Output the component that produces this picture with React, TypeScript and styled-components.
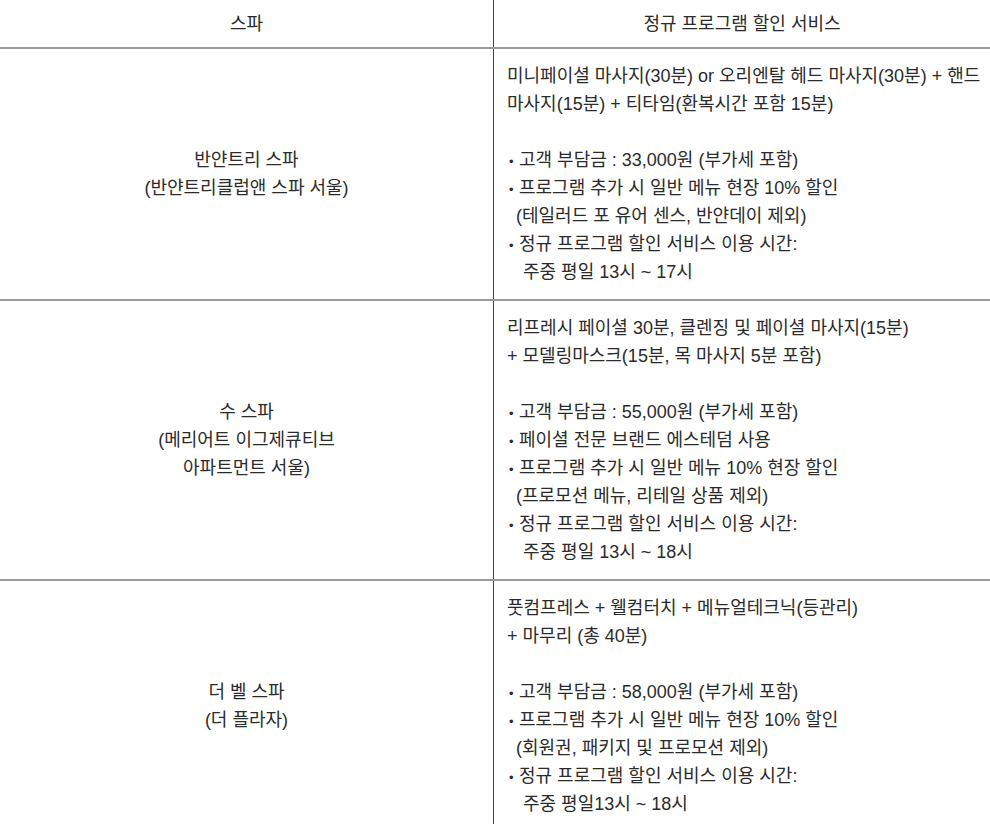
import React from "react";
import styled, { createGlobalStyle } from "styled-components";

type Note = {
  text: string;
  bullet?: boolean;
  indent?: number;
};

type Spa = {
  name: string[];
  intro: string[];
  notes: Note[];
};

const spas: Spa[] = [
  {
    name: ["반얀트리 스파", "(반얀트리클럽앤 스파 서울)"],
    intro: [
      "미니페이셜 마사지(30분) or 오리엔탈 헤드 마사지(30분) + 핸드",
      "마사지(15분) + 티타임(환복시간 포함 15분)",
    ],
    notes: [
      { text: "고객 부담금 : 33,000원 (부가세 포함)", bullet: true },
      { text: "프로그램 추가 시 일반 메뉴 현장 10% 할인", bullet: true },
      { text: "(테일러드 포 유어 센스, 반얀데이 제외)", indent: 9 },
      { text: "정규 프로그램 할인 서비스 이용 시간:", bullet: true },
      { text: "주중 평일 13시 ~ 17시", indent: 16 },
    ],
  },
  {
    name: ["수 스파", "(메리어트 이그제큐티브", "아파트먼트 서울)"],
    intro: [
      "리프레시 페이셜 30분, 클렌징 및 페이셜 마사지(15분)",
      "+ 모델링마스크(15분, 목 마사지 5분 포함)",
    ],
    notes: [
      { text: "고객 부담금 : 55,000원 (부가세 포함)", bullet: true },
      { text: "페이셜 전문 브랜드 에스테덤 사용", bullet: true },
      { text: "프로그램 추가 시 일반 메뉴 10% 현장 할인", bullet: true },
      { text: "(프로모션 메뉴, 리테일 상품 제외)", indent: 9 },
      { text: "정규 프로그램 할인 서비스 이용 시간:", bullet: true },
      { text: "주중 평일 13시 ~ 18시", indent: 16 },
    ],
  },
  {
    name: ["더 벨 스파", "(더 플라자)"],
    intro: ["풋컴프레스 + 웰컴터치 + 메뉴얼테크닉(등관리)", "+ 마무리 (총 40분)"],
    notes: [
      { text: "고객 부담금 : 58,000원 (부가세 포함)", bullet: true },
      { text: "프로그램 추가 시 일반 메뉴 현장 10% 할인", bullet: true },
      { text: "(회원권, 패키지 및 프로모션 제외)", indent: 9 },
      { text: "정규 프로그램 할인 서비스 이용 시간:", bullet: true },
      { text: "주중 평일13시 ~ 18시", indent: 16 },
    ],
  },
];

const App = () => {
  return (
    <>
      <GlobalStyle />
      <Table>
        <HeaderRow>
          <HeadCell $divider>스파</HeadCell>
          <HeadCell>정규 프로그램 할인 서비스</HeadCell>
        </HeaderRow>
        {spas.map((spa) => (
          <Row key={spa.name[0]}>
            <SpaCell>
              {spa.name.map((line) => (
                <Line key={line}>{line}</Line>
              ))}
            </SpaCell>
            <DetailCell>
              {spa.intro.map((line) => (
                <Line key={line}>{line}</Line>
              ))}
              <Notes>
                {spa.notes.map((note) => (
                  <NoteLine key={note.text} $indent={note.indent ?? 0}>
                    {note.bullet ? <Bullet>•</Bullet> : null}
                    {note.text}
                  </NoteLine>
                ))}
              </Notes>
            </DetailCell>
          </Row>
        ))}
      </Table>
    </>
  );
};

export default App;

const GlobalStyle = createGlobalStyle`
  html, body {
    margin: 0;
    padding: 0;
    background: #ffffff;
    overflow: hidden;
  }
  body {
    font-family: "Liberation Sans", "Noto Sans CJK KR", sans-serif;
    color: #2b2b2b;
  }
`;

const Table = styled.div`
  width: 990px;
  display: flex;
  flex-direction: column;
  font-size: 18px;
  line-height: 28px;
`;

const HeaderRow = styled.div`
  display: grid;
  grid-template-columns: 494px 1fr;
  height: 47px;
  border-bottom: 2px solid #9a9a9a;
`;

const HeadCell = styled.div<{ $divider?: boolean }>`
  display: flex;
  align-items: center;
  justify-content: center;
  border-right: ${(p) => (p.$divider ? "1px solid #444" : "none")};
`;

const Row = styled.div`
  display: grid;
  grid-template-columns: 494px 1fr;
  border-bottom: 2px solid #9a9a9a;
`;

const SpaCell = styled.div`
  display: flex;
  flex-direction: column;
  justify-content: center;
  align-items: center;
  text-align: center;
  border-right: 1px solid #444;
`;

const DetailCell = styled.div`
  padding: 13px 0 13px 13px;
  white-space: nowrap;
`;

const Line = styled.div`
  height: 28px;
`;

const Notes = styled.div`
  margin-top: 28px;
`;

const NoteLine = styled.div<{ $indent: number }>`
  height: 28px;
  padding-left: ${(p) => p.$indent}px;
`;

const Bullet = styled.span`
  display: inline-block;
  width: 10px;
  font-size: 13px;
  margin-left: 2px;
`;
